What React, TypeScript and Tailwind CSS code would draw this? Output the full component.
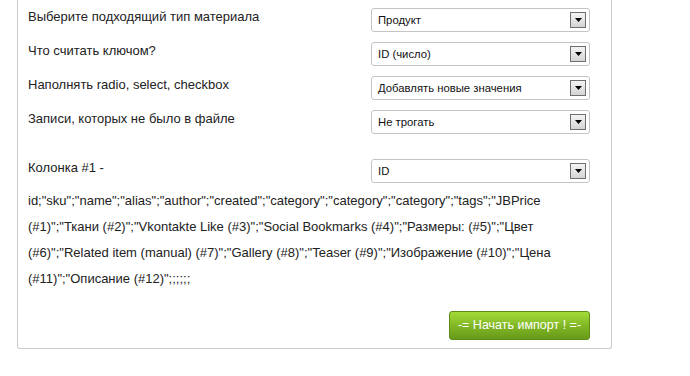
const rows = [
  { label: "Выберите подходящий тип материала", value: "Продукт" },
  { label: "Что считать ключом?", value: "ID (число)" },
  { label: "Наполнять radio, select, checkbox", value: "Добавлять новые значения" },
  { label: "Записи, которых не было в файле", value: "Не трогать" },
];

const columns =
  'id;"sku";"name";"alias";"author";"created";"category";"category";"category";"tags";"JBPrice (#1)";"Ткани (#2)";"Vkontakte Like (#3)";"Social Bookmarks (#4)";"Размеры: (#5)";"Цвет (#6)";"Related item (manual) (#7)";"Gallery (#8)";"Teaser (#9)";"Изображение (#10)";"Цена (#11)";"Описание (#12)";;;;;;';

function FakeSelect({ value }: { value: string }) {
  return (
    <div className="flex h-[24px] w-[219px] items-center justify-between rounded-[3px] border border-[#c4c4c4] bg-white pl-[6px] pr-[3px]">
      <span className="text-[11.3px] text-[#111]">{value}</span>
      <span className="flex h-[16px] w-[16px] items-center justify-center border border-[#6f6f6f] bg-[linear-gradient(180deg,#f4f4f4_0%,#d4d4d4_100%)]">
        <svg width="7" height="4" viewBox="0 0 7 4">
          <path d="M0 0h7L3.5 4z" fill="#000" />
        </svg>
      </span>
    </div>
  );
}

export default function App() {
  return (
    <div className="h-[376px] w-[690px] overflow-hidden bg-white font-['Liberation_Sans',Arial,sans-serif] text-[13px] text-[#222]">
      <div className="ml-[17px] w-[595px] rounded-b-[3px] border-x border-b border-[#cccccc] pb-[8px] pl-[10px] pr-[21px] pt-[8px]">
        {rows.map((row) => (
          <div key={row.label} className="flex h-[34px] items-start justify-between">
            <span className="mt-[1px] leading-[15px]">{row.label}</span>
            <FakeSelect value={row.value} />
          </div>
        ))}
        <div className="mt-[15px] flex h-[29px] items-start justify-between">
          <span className="mt-[1px] leading-[15px]">Колонка #1 -</span>
          <FakeSelect value="ID" />
        </div>
        <p className="leading-[26px]">{columns}</p>
        <div className="mt-[19px] flex justify-end">
          <button className="h-[29px] w-[141px] rounded-[3px] border border-[#5d8c17] bg-[linear-gradient(180deg,#a3dc38_0%,#82b826_50%,#679a1a_100%)] text-[12.5px] text-white">
            -= Начать импорт ! =-
          </button>
        </div>
      </div>
    </div>
  );
}
